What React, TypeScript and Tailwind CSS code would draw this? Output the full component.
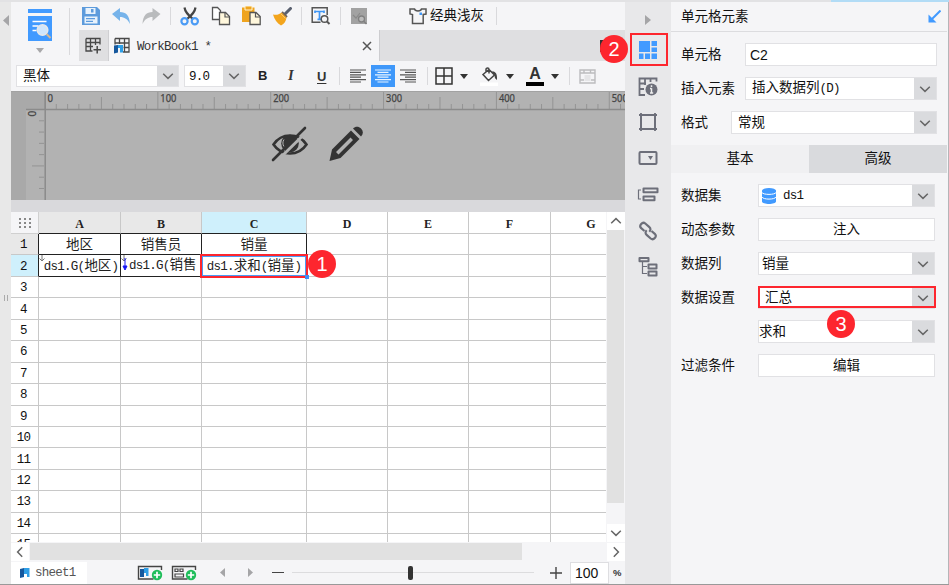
import React from "react";

const mono = "font-['Liberation_Mono','Noto_Sans_CJK_SC',monospace]";

// Latin glyphs are set tighter than the full-width Chinese ones
const Mixed: React.FC<{ text: string }> = ({ text }) => (
  <span className={`${mono} whitespace-pre`}>
    {text.split(/([\u4e00-\u9fff]+)/).map((part, i) =>
      /[\u4e00-\u9fff]/.test(part) ? (
        <span key={i} className="text-[13.5px]">
          {part}
        </span>
      ) : (
        <span key={i} className="text-[12.5px] tracking-[-0.75px]">
          {part}
        </span>
      )
    )}
  </span>
);

const Chevron: React.FC<{ rotate?: string }> = ({ rotate = "" }) => (
  <svg width="12" height="12" viewBox="0 0 12 12" className={rotate}>
    <path d="M1.2 3.8 6 8.4 10.8 3.8" fill="none" stroke="#666" strokeWidth="1.5" />
  </svg>
);

const Separator: React.FC<{ className?: string }> = ({ className = "" }) => (
  <div className={`w-px shrink-0 bg-[#d9d9dc] ${className}`} />
);

const Badge: React.FC<{ n: number; className: string }> = ({ n, className }) => (
  <div
    className={`absolute z-20 flex size-[28px] items-center justify-center rounded-full bg-[#fd262e] text-[20px] leading-none text-white ${className}`}
  >
    {n}
  </div>
);

const Toolbar: React.FC = () => (
  <div className="flex h-[28px] items-center">
    <svg width="20" height="20" viewBox="0 0 20 20" className="ml-[2px]">
      <path d="M1 1h15l3 3v15H1z" fill="#5d9bdc" />
      <path d="M4.500 2h10v6h-10z" fill="#e8f2fc" />
      <path d="M10 3h2.500v3.500H10z" fill="#5d9bdc" />
      <path d="M3.500 10.500h13v7h-13z" fill="#e8f2fc" />
      <path d="M5 12.700h9M5 15.300h7" stroke="#5d9bdc" strokeWidth="1.2" />
    </svg>
    <svg width="19" height="18" viewBox="0 0 19 18" className="ml-[11px]">
      <path d="M0 7 8 1v4c6 0 9.500 3.500 10 12C15.500 12 12.500 10 8 10v4z" fill="#76b3ea" />
    </svg>
    <svg width="19" height="18" viewBox="0 0 19 18" className="ml-[11px]">
      <path d="M18.500 7 10.500 1v4C4.500 5 1 8.500.5 17 3 12 6 10 10.500 10v4z" fill="#b9bbbd" />
    </svg>
    <Separator className="ml-[9px] h-[18px]" />
    <svg width="20" height="20" viewBox="0 0 20 20" className="ml-[9px]">
      <path d="M4.500 1.500c.5 4 4 8 8.500 11.500M15.500 1.500c-.5 4-4 8-8.500 11.500" fill="none" stroke="#444" strokeWidth="2.200" />
      <circle cx="4.500" cy="15.200" r="3.100" fill="none" stroke="#4b9bf5" strokeWidth="2.200" />
      <circle cx="14.800" cy="15.200" r="3.100" fill="none" stroke="#4b9bf5" strokeWidth="2.200" />
    </svg>
    <svg width="20" height="20" viewBox="0 0 20 20" className="ml-[11px]">
      <path d="M1.500 1.500h5l3 3v9h-8z" fill="#fff" stroke="#555" strokeWidth="1.300" />
      <path d="M8.500 6.500h6l4 4v8h-10z" fill="#fff7dc" stroke="#555" strokeWidth="1.300" />
      <path d="M14 7v4h4.500" fill="none" stroke="#555" strokeWidth="1.200" />
    </svg>
    <svg width="20" height="20" viewBox="0 0 20 20" className="ml-[11px]">
      <path d="M0 1.500h12.500V16H0z" fill="#efa41f" />
      <path d="M3 0h7v4H3z" fill="#efa41f" stroke="#fff3d0" strokeWidth="1" />
      <path d="M8 6.500h6l4.200 4v8H8z" fill="#fff7dc" stroke="#555" strokeWidth="1.300" />
      <path d="M13.500 7v4h4.500" fill="none" stroke="#555" strokeWidth="1.200" />
    </svg>
    <svg width="19" height="19" viewBox="0 0 19 19" className="ml-[11px]">
      <path d="M17.500 1.500 11 8" stroke="#59606f" strokeWidth="3" strokeLinecap="round" />
      <path d="m9 5 5 5" stroke="#70645d" strokeWidth="2" />
      <path d="M0 7.500c3.500.8 6 0 8.500-2l5 5C13 14 11.500 17 8 18.500 4 16 1.500 12.500 0 7.500z" fill="#f3a51d" />
      <path d="m7.500 6.500 5 5" stroke="#f8c66d" strokeWidth="1" />
    </svg>
    <Separator className="ml-[9px] h-[18px]" />
    <svg width="20" height="20" viewBox="0 0 20 20" className="ml-[9px]">
      <path d="M9.500 16.300H1.200V1.700h15V9" fill="none" stroke="#555" strokeWidth="1.500" />
      <path d="M4 5.500h9M8.500 5.500v8M4 4.600v2.400M13 4.600v2.400M6.500 13.400h4" stroke="#3f96f5" strokeWidth="1.700" />
      <circle cx="13.500" cy="13" r="3.300" fill="#f5f5f7" stroke="#555" strokeWidth="1.500" />
      <path d="m16 15.500 2.500 2.500" stroke="#555" strokeWidth="2" />
    </svg>
    <Separator className="ml-[9px] h-[18px]" />
    <svg width="18" height="18" viewBox="0 0 18 18" className="ml-[9px]">
      <path d="M1 1h16v16H1z" fill="#a2a2a2" />
      <path d="m3 8 3 3 4-5" fill="none" stroke="#8a8a8a" strokeWidth="1.200" />
      <circle cx="11.500" cy="12" r="3" fill="#bbb" stroke="#818181" strokeWidth="1.300" />
      <path d="m13.500 14 3 3" stroke="#818181" strokeWidth="1.500" />
    </svg>
    <svg width="18" height="18" viewBox="0 0 18 18" className="ml-[41px]">
      <path
        d="M1 2h4.500c.5 2.500 6.500 2.500 7 0H17v5l-2.800.5V16.500H3.500V7.500L1 7z"
        fill="none"
        stroke="#555"
        strokeWidth="1.500"
      />
      <path d="M10.500 5.500h2.500v2.500h-2.500z" fill="#3f96f5" />
    </svg>
    <span className="ml-[3px] w-[54px] text-[13.5px] leading-none">经典浅灰</span>
    <Separator className="ml-[12px] h-[18px]" />
  </div>
);

const WorkbookTabs: React.FC = () => (
  <div className="flex h-[31px] bg-[#dfdfe1]">
    <div className="flex w-[30px] items-center justify-center border-r border-[#cfcfd2]">
      <svg width="17" height="17" viewBox="0 0 17 17" fill="none" stroke="#484848" strokeWidth="1.300">
        <path d="M1 1.500h14v6M1 1.500v12.500h6.500M1 5.500h14M1 9.500h7M5.500 1.500V14M10.500 1.500v6.500" />
        <path d="M12.200 9v7.500M8.500 12.700H16" strokeWidth="1.500" />
      </svg>
    </div>
    <div className="flex w-[271px] items-center border-r border-[#cdcdd0] bg-[#f5f5f7]">
      <svg width="16" height="17" viewBox="0 0 16 17" className="ml-[5px]">
        <path
          d="M1 1.500h14v13.500H9M1 1.500v6M1 6h14M5.500 1.500V7M10.500 1.500V15M9.500 10.500H15"
          fill="none"
          stroke="#484848"
          strokeWidth="1.300"
        />
        <path d="M0 8.500 4 8v7.500L0 16.500z" fill="#15579d" />
        <path d="M4 8h5v7.500H6V11H4z" fill="#2e9ee6" />
      </svg>
      <div className="ml-[7px] flex-1 text-[#333]">
        <Mixed text="WorkBook1 *" />
      </div>
      <svg width="10" height="10" viewBox="0 0 10 10" className="mr-[7px]">
        <path d="m1 1 8 8M9 1 1 9" stroke="#555" strokeWidth="1.500" />
      </svg>
    </div>
    <div className="mt-[10px] mr-[13px] ml-auto size-[12px] bg-[#333]" />
  </div>
);

const Caret: React.FC<{ className?: string }> = ({ className = "" }) => (
  <svg width="8" height="5" viewBox="0 0 8 5" className={`shrink-0 ${className}`}>
    <path d="M0 0h8L4 5z" fill="#333" />
  </svg>
);

const FormatBar: React.FC = () => (
  <div className="flex h-[30px] items-center pl-[5px]">
    <div className="flex h-[22px] w-[163px] border border-[#e1e1e4] bg-white">
      <span className="flex-1 pl-[6px] text-[13.5px] leading-[20px]">黑体</span>
      <span className="flex w-[21px] items-center justify-center bg-[#dadbde]">
        <Chevron />
      </span>
    </div>
    <div className="ml-[5px] flex h-[22px] w-[62px] border border-[#e1e1e4] bg-white">
      <span className="flex-1 pl-[4px] leading-[18px]">
        <Mixed text="9.0" />
      </span>
      <span className="flex w-[22px] items-center justify-center bg-[#dadbde]">
        <Chevron />
      </span>
    </div>
    <span className="ml-[12px] w-[12px] text-[13px] font-bold text-[#222]">B</span>
    <span className="ml-[18px] w-[10px] font-['Liberation_Serif',serif] text-[14.5px] font-bold italic text-[#333]">I</span>
    <span className="ml-[19px] w-[10px] text-[13px] font-bold leading-none text-[#333] underline underline-offset-2">
      U
    </span>
    <Separator className="ml-[12px] h-[18px]" />
    <svg width="16" height="14" viewBox="0 0 16 14" className="ml-[10px]" stroke="#555" strokeWidth="1.200">
      <path d="M0 1h16M0 3.400h11M0 5.800h16M0 8.200h11M0 10.600h16M0 13h11" />
    </svg>
    <div className="ml-[5px] flex h-[22px] w-[24px] items-center justify-center bg-[#3f98fa]">
      <svg width="16" height="14" viewBox="0 0 16 14" stroke="#e8f3ff" strokeWidth="1.200">
        <path d="M0 1h16M2.500 3.400h11M0 5.800h16M2.500 8.200h11M0 10.600h16M2.500 13h11" />
      </svg>
    </div>
    <svg width="16" height="14" viewBox="0 0 16 14" className="ml-[5px]" stroke="#555" strokeWidth="1.200">
      <path d="M0 1h16M5 3.400h11M0 5.800h16M5 8.200h11M0 10.600h16M5 13h11" />
    </svg>
    <Separator className="ml-[11px] h-[18px]" />
    <svg width="18" height="18" viewBox="0 0 18 18" className="ml-[7px]" fill="none" stroke="#333" strokeWidth="1.500">
      <path d="M1 1h16v16H1zM9 1v16M1 9h16" />
    </svg>
    <Caret className="ml-[7px]" />
    <svg width="19" height="19" viewBox="0 0 19 19" className="ml-[12px]">
      <path d="M0 15.500h18V19H0z" fill="#fff" />
      <path d="M3 7.500 9 2.500l5.500 5.500-6 5.500zM6 6V2.300C6 .5 9 .5 9 2.500v4" fill="none" stroke="#444" strokeWidth="1.500" />
      <path d="M11.500 4.500c4-.5 6 2 5.500 8.500-2-1-2.500-3-2.500-5z" fill="#444" />
    </svg>
    <Caret className="ml-[7px]" />
    <div className="ml-[12px] flex w-[18px] flex-col items-center">
      <span className="text-[16px] font-bold leading-[14px] text-[#333]">A</span>
      <span className="mt-px h-[4px] w-[18px] bg-black" />
    </div>
    <Caret className="ml-[7px]" />
    <Separator className="ml-[10px] h-[18px]" />
    <svg width="17" height="15" viewBox="0 0 17 15" className="ml-[9px]" fill="none" stroke="#bcbcbe">
      <path d="M1 1h15v13H1zM1 4h15M5 1v3M11.500 1v3M1 11h4M12 11h4" strokeWidth="1.400" />
      <path d="M5.500 6h6v6h-6z" fill="#e5e5e7" stroke="none" />
    </svg>
  </div>
);

const rulerTicks = Array.from({ length: 52 }, (_, i) => i);

const Rulers: React.FC = () => (
  <svg width="614" height="109" viewBox="11 91 614 109" className="block shrink-0">
    <rect x="11" y="91" width="614" height="109" fill="#b2b2b2" />
    <rect x="11" y="91" width="15" height="109" fill="#a9a9a9" />
    <rect x="26" y="91" width="19" height="18" fill="#a9a9a9" />
    {rulerTicks.map((i) => {
      const x = 45 + i * 11.285;
      const top = i % 10 === 0 ? 92 : i % 5 === 0 ? 97 : 104;
      return <path key={i} d={`M${x} ${top}V109`} stroke="#949494" strokeWidth="1" />;
    })}
    {[0, 100, 200, 300, 400, 500].map((n) => (
      <text
        key={n}
        x={47.5 + n * 1.1285}
        y="102"
        fill="#444"
        stroke="#444"
        strokeWidth="0.25"
        fontSize="10.5"
        textLength={n === 0 ? 5.5 : 16}
        lengthAdjust="spacingAndGlyphs"
        className="font-['Noto_Sans',sans-serif]"
      >
        {n}
      </text>
    ))}
    {[1, 2, 3, 4, 5, 6, 7].map((i) => (
      <path key={i} d={`M${i === 5 ? 32 : 39} ${109.5 + i * 11.285}H44`} stroke="#949494" />
    ))}
    <text
      x="0"
      y="0"
      fill="#444"
      stroke="#444"
      strokeWidth="0.25"
      fontSize="10"
      transform="translate(36 116.500) rotate(-90)"
      className="font-['Noto_Sans',sans-serif]"
    >
      0
    </text>
    <path d="M26 109.500H625" stroke="#8b8b8b" strokeWidth="1.500" />
    <path d="M45.200 91V200" stroke="#8b8b8b" strokeWidth="1.500" />
    <path d="M11 91.500H625" stroke="#a2a2a2" />

    {/* hide and edit buttons of the report block */}
    <g>
      <path d="M273.500 144.500c8-12 25-12 33 0-8 12-25 12-33 0z" fill="none" stroke="#333" strokeWidth="2.600" />
      <circle cx="290" cy="143.500" r="8.800" fill="#333" />
      <path d="M284 139.500c-1.500 2-1.500 5 0 7" fill="none" stroke="#b2b2b2" />
      <path d="m276 162 33-32.500" stroke="#b2b2b2" strokeWidth="3" />
      <path d="m273 160 32-32" stroke="#333" strokeWidth="2.600" strokeLinecap="round" />
    </g>
    <g fill="#333">
      <path d="m329.500 161 2.500-11.500 19-19 8.500 8.500-19 19zM336 152l2.500 2.500 14.500-14.500-2.500-2.500z" fillRule="evenodd" />
      <path d="M353 128.500c2.500-2.500 5.500-2.500 8 0s2.500 5.500 0 8z" />
    </g>
  </svg>
);

const columns = [
  { name: "A", head: "bg-[#e8e8e8]" },
  { name: "B", head: "bg-[#e8e8e8]" },
  { name: "C", head: "bg-[#cff0fc]" },
  { name: "D", head: "bg-white" },
  { name: "E", head: "bg-white" },
  { name: "F", head: "bg-white" },
  { name: "G", head: "bg-white" },
];

const cells: Record<string, string> = {
  A1: "地区",
  B1: "销售员",
  C1: "销量",
  A2: "ds1.G(地区)",
  B2: "ds1.G(销售",
  C2: "ds1.求和(销量)",
};

const gridCols = "grid grid-cols-[28px_82px_81px_105px_81px_81px_82px_81px] w-[621px]";

const Sheet: React.FC = () => (
  <div className="h-[330px] w-[595px] overflow-hidden bg-white">
    <div className={`${gridCols} h-[22px] font-bold text-[#222]`}>
      <div className="flex items-center justify-center border-r border-b border-[#d0d0d0] bg-[#f5f5f7]">
        <svg width="12" height="10" viewBox="0 0 12 10" fill="#888">
          {[0, 4, 8].map((y) => (
            <path key={y} d={`M0 ${y}h2v2H0zM5 ${y}h2v2H5zM10 ${y}h2v2h-2z`} />
          ))}
        </svg>
      </div>
      {columns.map(({ name, head }) => (
        <div
          key={name}
          className={`flex items-center justify-center border-r border-b pt-[3px] font-['Liberation_Serif',serif] text-[12px] leading-none ${
            cells[name + 1] ? "border-r-[#c8c8c8] border-b-[#222]" : "border-[#c8c8c8]"
          } ${head}`}
        >
          {name}
        </div>
      ))}
    </div>
    {Array.from({ length: 15 }, (_, i) => i + 1).map((row) => (
      <div key={row} className={`${gridCols} h-[21.44px]`}>
        <div
          className={`flex items-center justify-center overflow-hidden border-r border-b pr-[2px] leading-none text-[#111] ${
            row === 1
              ? "border-r-[#222] border-b-[#c8c8c8] bg-[#e8e8e8]"
              : row === 2
                ? "border-r-[#222] border-b-[#c8c8c8] bg-[#cff0fc]"
                : "border-[#c8c8c8] bg-white"
          }`}
        >
          <Mixed text={String(row)} />
        </div>
        {columns.map(({ name }) => {
          const id = name + row;
          const text = cells[id];
          return (
            <div
              key={name}
              className={`relative flex items-center overflow-hidden border-r border-b leading-none text-[#222] ${
                text ? "border-[#222]" : "border-[#c8c8c8]"
              } ${id === "B2" ? "justify-start pb-[2px] pl-[8px]" : "justify-center"} ${
                id === "A2" ? "pt-[1px] pl-[3px]" : row === 1 ? "pt-[2px]" : ""
              }`}
            >
              {text && <Mixed text={text} />}
              {(id === "A2" || id === "B2") && (
                <svg width="8" height="20" viewBox="0 0 8 20" className="absolute top-0 left-0">
                  <path d="M3 0v6M.5 3.500 3 6l2.500-2.500" fill="none" stroke="#777" />
                  {id === "B2" && <path d="M4 3v9M2 11h4l-2 4z" fill="#1616f5" stroke="#1616f5" />}
                </svg>
              )}
            </div>
          );
        })}
      </div>
    ))}
  </div>
);

const Footer: React.FC = () => (
  <div className="flex h-[23px] items-center">
    <div className="flex h-[22px] w-[76px] items-center bg-white pl-[9px] text-[#555]">
      <svg width="10" height="10" viewBox="0 0 10 10">
        <path d="M0 1 4 0v9l-4 1z" fill="#15579d" />
        <path d="M4 0h5.500v9H7V6H4z" fill="#2e9ee6" />
      </svg>
      <span className="ml-[5px] pb-[2px]">
        <Mixed text="sheet1" />
      </span>
    </div>
    <svg width="26" height="16" viewBox="0 0 26 16" className="ml-[50px]">
      <path d="M24.500 5V1.500H1.500v12.500h15" fill="none" stroke="#444" strokeWidth="1.400" />
      <path d="M3 4h4v8H3z" fill="#15579d" />
      <path d="M7 3h4.500v8H9V8H7z" fill="#2e9ee6" />
      <circle cx="20" cy="10" r="5.200" fill="#1fbe5b" />
      <path d="M16.800 10h6.400M20 6.800v6.400" stroke="#fff" strokeWidth="1.700" />
    </svg>
    <svg width="26" height="16" viewBox="0 0 26 16" className="ml-[8px]">
      <path d="M24.500 5V1.500H1.500v12.500h15" fill="none" stroke="#444" strokeWidth="1.400" />
      <path d="M4 4h3v2.500H4zM9 4h3v2.500H9zM4 9h8.500v3H4z" fill="none" stroke="#444" strokeWidth="1.200" />
      <circle cx="20" cy="10" r="5.200" fill="#1fbe5b" />
      <path d="M16.800 10h6.400M20 6.800v6.400" stroke="#fff" strokeWidth="1.700" />
    </svg>
    <svg width="5" height="9" viewBox="0 0 5 9" className="ml-[23px]">
      <path d="M5 0v9L0 4.500z" fill="#a5a5a7" />
    </svg>
    <svg width="5" height="9" viewBox="0 0 5 9" className="ml-[23px]">
      <path d="M0 0v9l5-4.500z" fill="#a5a5a7" />
    </svg>
    <div className="ml-[19px] h-[1.5px] w-[12px] bg-[#444]" />
    <div className="ml-[8px] flex h-[14px] w-[242px] items-center">
      <div className="h-px w-[116px] bg-[#dcdcde]" />
      <div className="h-[14px] w-[5px] rounded-[2px] bg-[#333]" />
      <div className="h-px flex-1 bg-[#dcdcde]" />
    </div>
    <svg width="12" height="12" viewBox="0 0 12 12" className="ml-[16px]" stroke="#444" strokeWidth="1.400">
      <path d="M0 6h12M6 0v12" />
    </svg>
    <div className="ml-[8px] h-[22px] w-[39px] border border-[#dedee1] bg-white pl-[4px] text-[14px] leading-[20px]">
      100
    </div>
    <span className="ml-[4px] text-[9.5px] font-bold leading-none text-[#333]">%</span>
  </div>
);

const ScrollButton: React.FC<{ rotate?: string }> = ({ rotate }) => (
  <div className="flex size-[18px] shrink-0 items-center justify-center bg-white">
    <Chevron rotate={rotate} />
  </div>
);

const Designer: React.FC = () => (
  <main className="flex w-[614px] shrink-0 flex-col bg-[#f5f5f7]">
    <div className="flex">
      <div className="flex h-[59px] w-[58px] flex-col items-center pt-[7px]">
        <svg width="24" height="32" viewBox="0 0 24 32">
          <path d="M0 0h24v4H0zM0 7h24v25H0z" fill="#419aff" />
          <path d="M4.500 12.500h14M4.500 17h6M4.500 21.500h4" stroke="#fff" strokeWidth="1.600" />
          <circle cx="14.500" cy="21" r="5.300" fill="#cfe6fc" stroke="#e8e8e8" strokeWidth="1.500" />
          <path d="m18.500 25 4 4" stroke="#d5b895" strokeWidth="2" />
        </svg>
        <svg width="8" height="5" viewBox="0 0 8 5" className="mt-[7px]">
          <path d="M0 0h8L4 5z" fill="#a8a8aa" />
        </svg>
      </div>
      <Separator className="my-[6px] mr-[9px]" />
      <div className="flex-1">
        <Toolbar />
        <WorkbookTabs />
      </div>
    </div>
    <FormatBar />
    <Rulers />
    <div className="h-[12px] shrink-0 bg-[#d9d9dc]" />
    <div className="flex h-[331px] shrink-0">
      <Sheet />
      <div className="ml-[1px] flex h-[330px] w-[18px] flex-col">
        <ScrollButton rotate="rotate-180" />
        <div className="h-[273px] w-[17px] bg-[#e1e1e1]" />
        <div className="flex-1" />
        <ScrollButton />
      </div>
    </div>
    <div className="flex h-[18px] shrink-0">
      <ScrollButton rotate="rotate-90" />
      <div className="ml-px h-[17px] w-[492px] bg-[#e1e1e1]" />
      <div className="flex-1" />
      <ScrollButton rotate="-rotate-90" />
    </div>
    <Footer />
  </main>
);

const SideBar: React.FC = () => (
  <nav className="flex w-[46px] shrink-0 flex-col items-center bg-[#e8e8ea] pt-[13px]">
    <svg width="6" height="10" viewBox="0 0 6 10">
      <path d="M0 0v10l6-5z" fill="#a5a5a7" />
    </svg>
    <svg width="20" height="20" viewBox="0 0 20 20" className="mt-[15px]" fill="#419aff">
      <path d="M1 1h11v11H1zM13.500 1H19v5h-5.500zM13.500 7.500H19v4.500h-5.500zM1 13.500h4.500V19H1zM7 13.500h5V19H7zM13.500 13.500H19V19h-5.500z" />
    </svg>
    <svg width="20" height="20" viewBox="0 0 20 20" className="mt-[17px]">
      <path
        d="M18.500 4.500V1.500H1.500V18H7M1.500 6.500H8M1.500 12H6M7 1.500V8M12.500 1.500V5"
        fill="none"
        stroke="#6d6f7a"
        strokeWidth="1.800"
      />
      <circle cx="13.500" cy="12.500" r="6" fill="#6d6f7a" />
      <path d="M13.500 8.300v1.700M13.500 11.300V16M12 11.500h1.500M12 16h3.200" stroke="#eee" strokeWidth="1.500" />
    </svg>
    <svg width="20" height="20" viewBox="0 0 20 20" className="mt-[15px]" fill="none" stroke="#6d6f7a" strokeWidth="2">
      <path d="M3 3h14v14H3z" />
      <path d="M1 3h2V1M17 1v2h2M1 17h2v2M17 19v-2h2" strokeWidth="1.800" />
    </svg>
    <svg width="20" height="16" viewBox="0 0 20 16" className="mt-[18px]">
      <rect x="1.500" y="2" width="17" height="12" rx="1" fill="none" stroke="#6d6f7a" strokeWidth="2" />
      <path d="M10 6h5l-2.500 4z" fill="#6d6f7a" />
    </svg>
    <svg width="22" height="18" viewBox="0 0 22 18" className="mt-[20px]" fill="none" stroke="#6d6f7a" strokeWidth="2">
      <path d="M6.500 2.500h14v3.800h-14zM6.500 10.500h11v3.800h-11z" strokeLinejoin="round" />
      <path d="M4 4H1.500v9H4" strokeWidth="1.200" />
    </svg>
    <svg width="20" height="20" viewBox="0 0 20 20" className="mt-[17px]" fill="none" stroke="#6d6f7a" strokeWidth="2.200">
      <path d="M6.500 10 3.200 7.200C.5 4.500 4.500.2 7.300 2.500l3.800 3.300c2 1.800 1.500 3.700.2 5" />
      <path d="m13.500 10 3.300 2.800c2.700 2.700-1.300 7-4.100 4.700l-3.800-3.300c-2-1.800-1.500-3.700-.2-5" />
    </svg>
    <svg width="20" height="21" viewBox="0 0 20 21" className="mt-[15px]" fill="none" stroke="#6d6f7a" strokeWidth="2">
      <path d="M1.500 2h9v3.200h-9zM10.500 8.500h8v4h-8zM10.500 15.500h8v4h-8z" strokeLinejoin="round" />
      <path d="M4.500 6v11.500H9M4.500 10.500H9" strokeWidth="1.200" />
    </svg>
  </nav>
);

const Field: React.FC<{
  label: string;
  width: string;
  select?: boolean;
  className?: string;
  children: React.ReactNode;
}> = ({ label, width, select, className = "px-[6px]", children }) => (
  <div className="flex h-[23px] items-center justify-between">
    <span className="pt-px">{label}</span>
    <div className={`flex h-[23px] border border-[#e1e1e4] bg-white ${width}`}>
      <div className={`flex flex-1 items-center ${className}`}>{children}</div>
      {select && (
        <span className="flex w-[22px] items-center justify-center bg-[#dadbde]">
          <Chevron />
        </span>
      )}
    </div>
  </div>
);

const Properties: React.FC = () => (
  <aside className="w-[276px] shrink-0 bg-[#f5f5f7] text-[13.5px] leading-none">
    <div className="flex h-[30px] items-center justify-between border-b border-[#dcdcdf] pr-[6px] pl-[10px]">
      <span>单元格元素</span>
      <svg width="13" height="13" viewBox="0 0 13 13">
        <path d="M12.500.5 4 9" stroke="#419aff" strokeWidth="2" />
        <path d="M.5 4.500v8h8z" fill="#419aff" />
      </svg>
    </div>
    <div className="flex flex-col gap-[11px] pt-[11px] pr-[10px] pl-[10px]">
      <Field label="单元格" width="w-[192px]" className="px-[4px]">
        <span className="text-[14px]">C2</span>
      </Field>
      <Field label="插入元素" width="w-[192px]" select>
        <Mixed text="插入数据列(D)" />
      </Field>
      <Field label="格式" width="w-[206px]" select>
        常规
      </Field>
    </div>
    <div className="mt-[11px] grid h-[28px] grid-cols-2 text-center leading-[28px]">
      <span className="bg-[#f0f0f2]">基本</span>
      <span className="bg-[#d9dadd]">高级</span>
    </div>
    <div className="flex flex-col gap-[11px] pt-[11px] pr-[12px] pl-[10px]">
      <Field label="数据集" width="w-[177px]" select className="px-[3px]">
        <svg width="14" height="16" viewBox="0 0 14 16" className="mr-[7px]">
          <path d="M0 2.500v11c0 3.300 14 3.300 14 0v-11z" fill="#419aff" />
          <ellipse cx="7" cy="2.800" rx="7" ry="2.800" fill="#419aff" />
          <path d="M0 4.500c1 2.500 13 2.500 14 0M0 9c1 2.800 13 2.800 14 0" fill="none" stroke="#fff" />
        </svg>
        <Mixed text="ds1" />
      </Field>
      <Field label="动态参数" width="w-[177px]" className="justify-center">
        注入
      </Field>
      <Field label="数据列" width="w-[177px]" select className="px-[3px]">
        销量
      </Field>
      <Field label="数据设置" width="w-[177px]" select>
        汇总
      </Field>
      <Field label="" width="w-[177px]" select className="">
        求和
      </Field>
      <Field label="过滤条件" width="w-[177px]" className="justify-center">
        编辑
      </Field>
    </div>
  </aside>
);

const App: React.FC = () => (
  <div className="relative flex h-[585px] w-[949px] flex-col overflow-hidden border-b border-[#999] bg-[#f5f5f7] font-['Liberation_Sans','Noto_Sans_CJK_SC',sans-serif] text-[#111]">
    <div className="flex h-[2px] shrink-0 bg-[#e2e2e4]">
      <div className="ml-auto w-[118px] bg-[#b2dcf6]" />
    </div>
    <div className="flex min-h-0 flex-1">
      <div className="flex w-[11px] shrink-0 flex-col items-center bg-[#e8e8e8] pt-[13px]">
        <svg width="6" height="11" viewBox="0 0 6 11">
          <path d="M6 0v11L0 5.500z" fill="#a5a5a7" />
        </svg>
        <div className="mt-[269px] h-[6px] w-[4px] border-x border-[#aaa]" />
      </div>
      <Designer />
      <SideBar />
      <Properties />
      <div className="ml-auto w-px bg-[#b5b5b8]" />
    </div>

    {/* Step highlights */}
    <div className="absolute top-[254px] left-[200px] h-[24px] w-[108px] border-2 border-[#fd262e]">
      <div className="h-full border border-[#4b9bf5]" />
    </div>
    <div className="absolute top-[275px] left-[305px] size-[4px] bg-[#3f8df5]" />
    <div className="absolute top-[33px] left-[630px] h-[33px] w-[38px] border-2 border-[#fd262e]" />
    <div className="absolute top-[286px] left-[758px] h-[22px] w-[178px] border-2 border-[#fd262e]" />
    <Badge n={1} className="top-[250px] left-[308px]" />
    <Badge n={2} className="top-[35px] left-[600px]" />
    <Badge n={3} className="top-[310px] left-[827px]" />
  </div>
);

export default App;
